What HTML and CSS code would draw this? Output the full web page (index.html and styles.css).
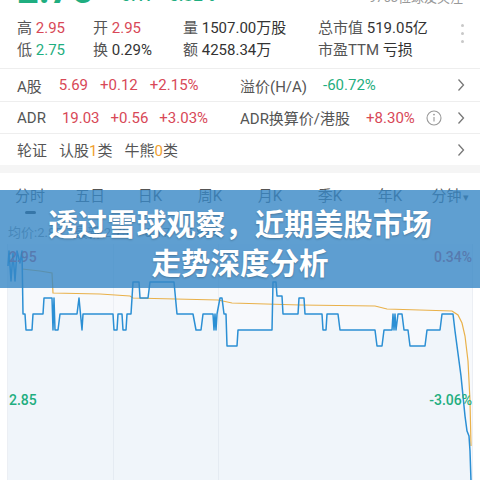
FILE: index.html
```html
<!DOCTYPE html>
<html lang="zh">
<head>
<meta charset="utf-8">
<link rel="stylesheet" href="styles.css">
</head>
<body>
<div class="page">
  <div class="head">
    <span class="big-price">2.75</span>
    <span class="chg">-0.17&nbsp;&nbsp;-5.82%</span>
    <span class="fans">9763位球友关注</span>
  </div>

  <div class="stats">
    <div class="stat-grid">
      <div><span class="lbl">高</span> <span class="up">2.95</span></div>
      <div><span class="lbl">开</span> <span class="up">2.95</span></div>
      <div><span class="lbl">量</span> 1507.00万股</div>
      <div><span class="lbl">总市值</span> 519.05亿</div>
      <div><span class="lbl">低</span> <span class="down">2.75</span></div>
      <div><span class="lbl">换</span> 0.29%</div>
      <div><span class="lbl">额</span> 4258.34万</div>
      <div><span class="lbl">市盈TTM</span> 亏损</div>
    </div>
    <div class="dots"><i></i><i></i><i></i></div>
  </div>

  <div class="row r1">
    <div class="cell"><span class="lbl">A股</span><span class="up">5.69</span><span class="up">+0.12</span><span class="up">+2.15%</span></div>
    <div class="cell"><span class="lbl">溢价(H/A)</span><span class="down">-60.72%</span></div>
    <svg class="chev" viewBox="0 0 8 14" width="8" height="14"><polyline points="1.5,1.5 6.5,7 1.5,12.5"/></svg>
  </div>
  <div class="row r2">
    <div class="cell"><span class="lbl">ADR</span><span class="up">19.03</span><span class="up">+0.56</span><span class="up">+3.03%</span></div>
    <div class="cell"><span class="lbl">ADR换算价/港股</span><span class="up">+8.30%</span>
      <svg class="info-ic" viewBox="0 0 16 16" width="16" height="16"><circle cx="8" cy="8" r="7"/><line x1="8" y1="7" x2="8" y2="11.5"/><circle class="dot" cx="8" cy="4.6" r="0.9"/></svg>
    </div>
    <svg class="chev" viewBox="0 0 8 14" width="8" height="14"><polyline points="1.5,1.5 6.5,7 1.5,12.5"/></svg>
  </div>
  <div class="row r3 last">
    <div class="cell wide"><span class="lbl">轮证</span><span class="lbl tight">认股<b class="orange">1</b>类</span><span class="lbl tight">牛熊<b class="orange">0</b>类</span></div>
    <svg class="chev" viewBox="0 0 8 14" width="8" height="14"><polyline points="1.5,1.5 6.5,7 1.5,12.5"/></svg>
  </div>

  <div class="band"></div>

  <div class="tabs">
    <div class="tab active">分时</div>
    <div class="tab">五日</div>
    <div class="tab">日K</div>
    <div class="tab">周K</div>
    <div class="tab">月K</div>
    <div class="tab">季K</div>
    <div class="tab">年K</div>
    <div class="tab">分钟<span class="caret">▾</span></div>
  </div>
  <div class="ind-row"><span class="indicator"></span></div>

  <div class="info">
    <span>均价:2.85</span><span>最新:2.75</span><span>-0.17</span><span>-5.82%</span>
  </div>

  <div class="chart">
    <svg class="chart-svg" viewBox="0 243 480 237" width="480" height="237">
      <rect x="7" y="243" width="466" height="237" fill="#f7f9fc"/>
      <line class="grid" x1="7.5" y1="243" x2="7.5" y2="480"/>
      <line class="grid" x1="113.5" y1="243" x2="113.5" y2="480"/>
      <line class="grid" x1="218.5" y1="243" x2="218.5" y2="480"/>
      <line class="grid" x1="472.5" y1="243" x2="472.5" y2="480"/>
      <polygon class="area" points="8,265 9,250 11,280 13,252 15,280 17,250 20,262 22,250 23,313 25,313 26,329 32,329 33,313 43,313 44,297 52,297 53,329 54,297 55,329 58,329 60,313 77,313 79,297 82,329 83,313 113,313 114,329 117,329 118,313 122,313 123,329 126,329 127,313 131,313 133,281 139,281 140,297 148,297 150,281 174,281 177,313 193,313 196,329 201,329 203,313 213,313 214,329 215,313 216,329 217,313 220,297 222,297 224,313 226,313 227,345 237,345 238,329 272,329 273,281 276,281 277,295 282,295 283,313 298,313 299,297 304,297 305,313 322,313 323,329 326,329 327,313 338,313 340,329 375,329 377,345 382,345 384,329 392,329 393,313 394,329 395,313 396,329 398,313 402,313 404,329 408,329 410,345 425,345 427,329 440,329 442,313 453,313 455,330 457,345 459,360 461,375 463,395 465,415 467,430 469,435 470,450 471,480 8,480"/>
      <polyline class="avg" points="22,268 40,270 52,272 53,292 100,293 130,295 133,297 218,299 232,302 300,304 375,305 387,308 452,310 458,314 462,322 465,335 468,360 470,400 471,445"/>
      <polyline class="price" points="8,265 9,250 11,280 13,252 15,280 17,250 20,262 22,250 23,313 25,313 26,329 32,329 33,313 43,313 44,297 52,297 53,329 54,297 55,329 58,329 60,313 77,313 79,297 82,329 83,313 113,313 114,329 117,329 118,313 122,313 123,329 126,329 127,313 131,313 133,281 139,281 140,297 148,297 150,281 174,281 177,313 193,313 196,329 201,329 203,313 213,313 214,329 215,313 216,329 217,313 220,297 222,297 224,313 226,313 227,345 237,345 238,329 272,329 273,281 276,281 277,295 282,295 283,313 298,313 299,297 304,297 305,313 322,313 323,329 326,329 327,313 338,313 340,329 375,329 377,345 382,345 384,329 392,329 393,313 394,329 395,313 396,329 398,313 402,313 404,329 408,329 410,345 425,345 427,329 440,329 442,313 453,313 455,330 457,345 459,360 461,375 463,395 465,415 467,430 469,435 470,450 471,480"/>
    </svg>
    <span class="axis tl up">2.95</span>
    <span class="axis tr up">0.34%</span>
    <span class="axis bl down">2.85</span>
    <span class="axis br down">-3.06%</span>
  </div>

  <div class="banner">
    <div class="banner-line">透过雪球观察，近期美股市场</div>
    <div class="banner-line">走势深度分析</div>
  </div>
</div>
</body>
</html>
```
FILE: styles.css
```css
* { box-sizing: border-box; margin: 0; padding: 0; }
html, body { width: 480px; height: 480px; overflow: hidden; background: #fff; }
body {
  font-family: "Roboto", "Noto Sans CJK SC", sans-serif;
  color: #333;
  font-size: 15px;
}
.page { position: relative; width: 480px; height: 480px; overflow: hidden; }

.up { color: #d84857; }
.down { color: #1fae80; }
.lbl { color: #555; }
.orange { color: #f0a030; font-weight: 400; }

/* cut-off header */
.head {
  display: flex;
  align-items: flex-end;
  height: 40px;
  margin-top: -32px;
  padding: 0 17px;
  overflow: hidden;
}
.big-price { font-size: 38px; font-weight: 700; color: #1fae80; line-height: 38px; margin-bottom: -1px; }
.chg { font-size: 17px; font-weight: 500; color: #1fae80; margin-left: 22px; line-height: 17px; margin-bottom: 4px; }
.fans { margin-left: auto; font-size: 13px; color: #999; line-height: 13px; margin-bottom: 4px; }

/* stats */
.stats {
  display: flex;
  padding: 7px 16px 9px 17px;
  border-bottom: 1px solid #eeeeee;
}
.stat-grid {
  display: grid;
  grid-template-columns: 76px 90px 135px 1fr;
  grid-auto-rows: 22px;
  align-items: center;
  flex: 1;
  white-space: nowrap;
}
.dots { display: flex; flex-direction: column; gap: 5px; padding-top: 9px; }
.dots i { display: block; width: 3px; height: 3px; border-radius: 50%; background: #c8c8c8; }

/* list rows */
.row {
  display: grid;
  grid-template-columns: 223px 1fr auto;
  align-items: center;
  height: 33px;
  padding: 0 15px 0 17px;
  border-bottom: 1px solid #eeeeee;
  white-space: nowrap;
}
.row.r2 { height: 32px; }
.row.r3 { height: 31px; border-bottom: none; }
.cell { display: flex; align-items: center; gap: 11px; }
.cell .lbl + span { margin-left: 5px; }
.row.r1 .cell:first-child { gap: 12px; }
.cell.wide { grid-column: 1 / 3; gap: 12px; }
.cell.wide .lbl + .tight { margin-left: 0; }
.tight b { font-weight: 400; }
.chev { fill: none; stroke: #777; stroke-width: 1.3; }
.info-ic { fill: none; stroke: #999; stroke-width: 1.1; }
.info-ic .dot { fill: #999; stroke: none; }

.band { height: 8px; background: #f5f5f5; }

/* tabs */
.tabs {
  display: grid;
  grid-template-columns: repeat(8, 60px);
  height: 34px;
  margin-top: 4px;
  align-items: center;
  justify-items: center;
  color: #555;
  white-space: nowrap;
}
.tab { position: relative; }
.caret { font-size: 11px; margin-left: 1px; color: #555; }
.ind-row { height: 3px; }
.indicator { display: block; width: 11px; height: 3px; margin-left: 25px; border-radius: 2px; background: #333; }

.info {
  display: flex;
  gap: 12px;
  padding: 8px 0 0 8px;
  height: 30px;
  line-height: 22px;
  font-size: 13px;
  color: #888;
  white-space: nowrap;
}

/* chart */
.chart { position: relative; height: 237px; }
.chart-svg { display: block; }
.grid { stroke: #eceff4; stroke-width: 1; }
.area { fill: rgba(43, 143, 212, 0.035); stroke: none; }
.price { fill: none; stroke: #2b8fd4; stroke-width: 1.5; stroke-linejoin: round; }
.avg { fill: none; stroke: #e9b14a; stroke-width: 1.2; }
.axis { position: absolute; font-size: 14px; font-weight: 500; line-height: 16px; }
.axis.tl { left: 9px; top: 5px; }
.axis.tr { right: 8px; top: 5px; }
.axis.bl { left: 9px; top: 148px; }
.axis.br { right: 8px; top: 148px; }

/* overlay title */
.banner {
  position: absolute;
  left: 0;
  right: 0;
  top: 190px;
  height: 98px;
  padding-top: 5px;
  background: rgba(55, 135, 197, 0.8);
  display: flex;
  flex-direction: column;
  justify-content: center;
  align-items: center;
}
.banner-line {
  font-family: "Noto Sans CJK SC", sans-serif;
  font-weight: 700;
  font-size: 29.5px;
  line-height: 39px;
  color: #fff;
  white-space: nowrap;
  text-shadow: 0 1px 2px rgba(0, 0, 0, 0.25);
}
```
